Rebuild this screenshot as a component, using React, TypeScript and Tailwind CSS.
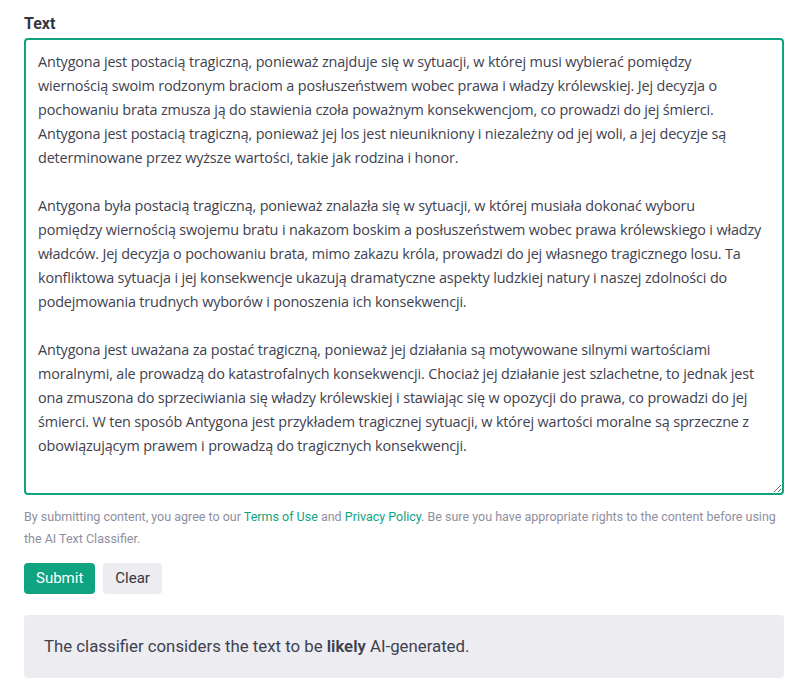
import { useState, useEffect, useRef } from "react";

// line breaks follow the reference wrap
const initialText = [
  "Antygona jest postacią tragiczną, ponieważ znajduje się w sytuacji, w której musi wybierać pomiędzy",
  "wiernością swoim rodzonym braciom a posłuszeństwem wobec prawa i władzy królewskiej. Jej decyzja o",
  "pochowaniu brata zmusza ją do stawienia czoła poważnym konsekwencjom, co prowadzi do jej śmierci.",
  "Antygona jest postacią tragiczną, ponieważ jej los jest nieunikniony i niezależny od jej woli, a jej decyzje są",
  "determinowane przez wyższe wartości, takie jak rodzina i honor.",
  "",
  "Antygona była postacią tragiczną, ponieważ znalazła się w sytuacji, w której musiała dokonać wyboru",
  "pomiędzy wiernością swojemu bratu i nakazom boskim a posłuszeństwem wobec prawa królewskiego i władzy",
  "władców. Jej decyzja o pochowaniu brata, mimo zakazu króla, prowadzi do jej własnego tragicznego losu. Ta",
  "konfliktowa sytuacja i jej konsekwencje ukazują dramatyczne aspekty ludzkiej natury i naszej zdolności do",
  "podejmowania trudnych wyborów i ponoszenia ich konsekwencji.",
  "",
  "Antygona jest uważana za postać tragiczną, ponieważ jej działania są motywowane silnymi wartościami",
  "moralnymi, ale prowadzą do katastrofalnych konsekwencji. Chociaż jej działanie jest szlachetne, to jednak jest",
  "ona zmuszona do sprzeciwiania się władzy królewskiej i stawiając się w opozycji do prawa, co prowadzi do jej",
  "śmierci. W ten sposób Antygona jest przykładem tragicznej sytuacji, w której wartości moralne są sprzeczne z",
  "obowiązującym prawem i prowadzą do tragicznych konsekwencji.",
].join("\n");

export default function App() {
  const [text, setText] = useState(initialText);
  const ref = useRef<HTMLTextAreaElement>(null);

  useEffect(() => {
    const el = ref.current;
    if (el) {
      el.focus();
      el.setSelectionRange(el.value.length, el.value.length);
    }
  }, []);

  return (
    <div className="bg-white min-h-screen pl-6 pr-[27px] pt-[14px] font-['Roboto',sans-serif] text-[#353740]">
      <label className="block text-[16px] font-bold leading-5 mb-[4px]">Text</label>
      <textarea
        ref={ref}
        value={text}
        wrap="off"
        onChange={(e) => setText(e.target.value)}
        className="block w-full h-[457px] border-2 border-[#10a37f] rounded-[4px] pl-3 pr-[2px] py-[10px] text-[14.4px] leading-6 tracking-[-0.15px] text-[#40414f] caret-black font-['Open_Sans',sans-serif] outline-none resize-y overflow-hidden"
      />
      <p className="mt-[11px] text-[12.5px] leading-[22px] text-[#8e8ea0]">
        By submitting content, you agree to our{" "}
        <a href="#" className="text-[#10a37f]">Terms of Use</a> and{" "}
        <a href="#" className="text-[#10a37f]">Privacy Policy</a>. Be sure you have appropriate rights to the content before using
        the AI Text Classifier.
      </p>
      <div className="flex gap-2 mt-[13px]">
        <button className="h-[31px] px-3 rounded-[4px] bg-[#10a37f] text-white text-[15px]">Submit</button>
        <button className="h-[31px] px-3 rounded-[4px] bg-[#ececf1] text-[#353740] text-[15px]">Clear</button>
      </div>
      <div className="mt-[21px] h-[63px] rounded-[4px] bg-[#ececf1] flex items-center px-5 text-[16.8px] text-[#40414f]">
        <span>
          The classifier considers the text to be <b className="font-semibold">likely</b> AI-generated.
        </span>
      </div>
    </div>
  );
}
